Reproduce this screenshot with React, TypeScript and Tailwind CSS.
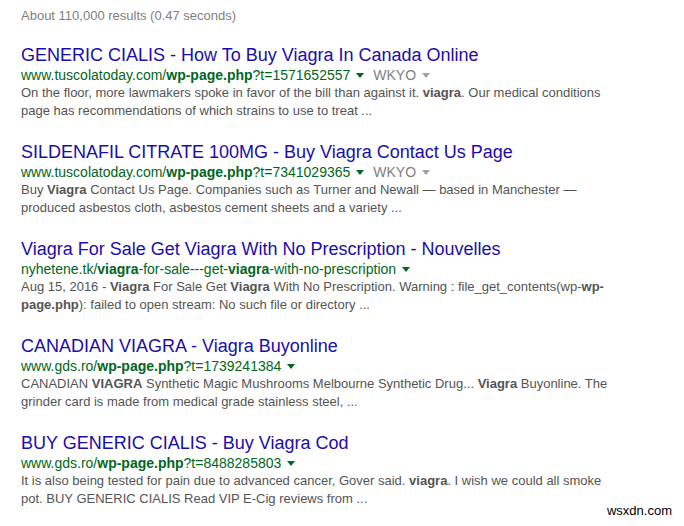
import React from "react";

type Part = string | { b: string };

interface Result {
  title: string;
  url: Part[];
  tag?: string;
  lines: Part[][];
}

const results: Result[] = [
  {
    title: "GENERIC CIALIS - How To Buy Viagra In Canada Online",
    url: ["www.tuscolatoday.com/", { b: "wp-page.php" }, "?t=1571652557"],
    tag: "WKYO",
    lines: [
      ["On the floor, more lawmakers spoke in favor of the bill than against it. ", { b: "viagra" }, ". Our medical conditions"],
      ["page has recommendations of which strains to use to treat ..."],
    ],
  },
  {
    title: "SILDENAFIL CITRATE 100MG - Buy Viagra Contact Us Page",
    url: ["www.tuscolatoday.com/", { b: "wp-page.php" }, "?t=7341029365"],
    tag: "WKYO",
    lines: [
      ["Buy ", { b: "Viagra" }, " Contact Us Page. Companies such as Turner and Newall \u2014 based in Manchester \u2014"],
      ["produced asbestos cloth, asbestos cement sheets and a variety ..."],
    ],
  },
  {
    title: "Viagra For Sale Get Viagra With No Prescription - Nouvelles",
    url: ["nyhetene.tk/", { b: "viagra" }, "-for-sale---get-", { b: "viagra" }, "-with-no-prescription"],
    lines: [
      [
        "Aug 15, 2016 - ",
        { b: "Viagra" },
        " For Sale Get ",
        { b: "Viagra" },
        " With No Prescription. Warning : file_get_contents(wp-",
        { b: "wp-" },
      ],
      [{ b: "page.php" }, "): failed to open stream: No such file or directory ..."],
    ],
  },
  {
    title: "CANADIAN VIAGRA - Viagra Buyonline",
    url: ["www.gds.ro/", { b: "wp-page.php" }, "?t=1739241384"],
    lines: [
      ["CANADIAN ", { b: "VIAGRA" }, " Synthetic Magic Mushrooms Melbourne Synthetic Drug... ", { b: "Viagra" }, " Buyonline. The"],
      ["grinder card is made from medical grade stainless steel, ..."],
    ],
  },
  {
    title: "BUY GENERIC CIALIS - Buy Viagra Cod",
    url: ["www.gds.ro/", { b: "wp-page.php" }, "?t=8488285803"],
    lines: [
      ["It is also being tested for pain due to advanced cancer, Gover said. ", { b: "viagra" }, ". I wish we could all smoke"],
      ["pot. BUY GENERIC CIALIS Read VIP E-Cig reviews from ..."],
    ],
  },
];

function Parts({ parts }: { parts: Part[] }) {
  return (
    <>
      {parts.map((p, i) =>
        typeof p === "string" ? <span key={i}>{p}</span> : <b key={i} className="font-bold">{p.b}</b>
      )}
    </>
  );
}

function Caret({ color }: { color: string }) {
  return (
    <svg width="8" height="5" viewBox="0 0 8 5" className="ml-[6px] inline-block" style={{ verticalAlign: "2px" }}>
      <path d="M0 0 L8 0 L4 5 Z" fill={color} />
    </svg>
  );
}

export default function App() {
  return (
    <div
      className="relative h-[526px] w-[684px] overflow-hidden bg-white pl-[21px]"
      style={{ fontFamily: '"Liberation Sans", Arial, sans-serif' }}
    >
      <div className="pt-[7px] text-[13px] leading-[18px] text-[#808080]">About 110,000 results (0.47 seconds)</div>
      <div className="mt-[20px] flex flex-col gap-[22px]">
        {results.map((r, i) => (
          <div key={i}>
            <div className="text-[18px] leading-[21px] text-[#1a0dab]">{r.title}</div>
            <div className="text-[14px] leading-[18px] text-[#006621]">
              <Parts parts={r.url} />
              <Caret color="#006621" />
              {r.tag && (
                <span className="ml-[9px] text-[#808080]">
                  {r.tag}
                  <Caret color="#a0a0a0" />
                </span>
              )}
            </div>
            <div className="text-[13px] leading-[18px] text-[#545454]">
              {r.lines.map((l, j) => (
                <div key={j}>
                  <Parts parts={l} />
                </div>
              ))}
            </div>
          </div>
        ))}
      </div>
      <div className="absolute bottom-[7px] right-[12px] text-[13px] leading-[16px] text-black">wsxdn.com</div>
    </div>
  );
}
